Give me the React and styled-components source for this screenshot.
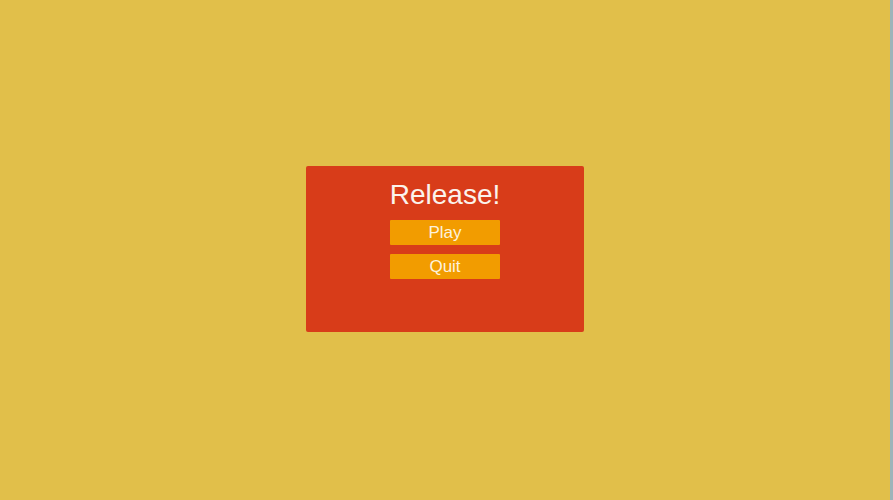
import styled, { createGlobalStyle } from "styled-components";

const GlobalStyle = createGlobalStyle`
    html, body {
        margin: 0;
        padding: 0;
        height: 100%;
    }
    #root {
        height: 100%;
    }
`;

const Screen = styled.div`
    display: flex;
    height: 100vh;
    font-family: "Liberation Sans", Arial, sans-serif;
`;

const Stage = styled.div`
    flex: 1;
    display: flex;
    align-items: center;
    justify-content: center;
    background-color: #e1bf4a;
`;

const Edge = styled.div`
    width: 3px;
    background-color: #9db4ba;
`;

const Panel = styled.div`
    width: 278px;
    height: 166px;
    margin-bottom: 2px;
    box-sizing: border-box;
    padding-top: 13px;
    background-color: #d83c19;
    border-radius: 2px;
    display: flex;
    flex-direction: column;
    align-items: center;
    h1 {
        margin: 0 0 9px;
        font-size: 28px;
        line-height: 32px;
        font-weight: 400;
        color: #fbf3ec;
    }
`;

const Button = styled.button`
    width: 110px;
    height: 25px;
    margin-bottom: ${(p) => p.gap}px;
    padding: 0;
    border: none;
    border-radius: 1px;
    background-color: #f29c00;
    color: #fdf2dc;
    font-family: inherit;
    font-size: 17px;
    line-height: 25px;
`;

const App = () => {
    return (
        <Screen>
            <GlobalStyle />
            <Stage>
                <Panel>
                    <h1>Release!</h1>
                    <Button gap={9}>Play</Button>
                    <Button gap={0}>Quit</Button>
                </Panel>
            </Stage>
            <Edge />
        </Screen>
    );
};

export default App;
